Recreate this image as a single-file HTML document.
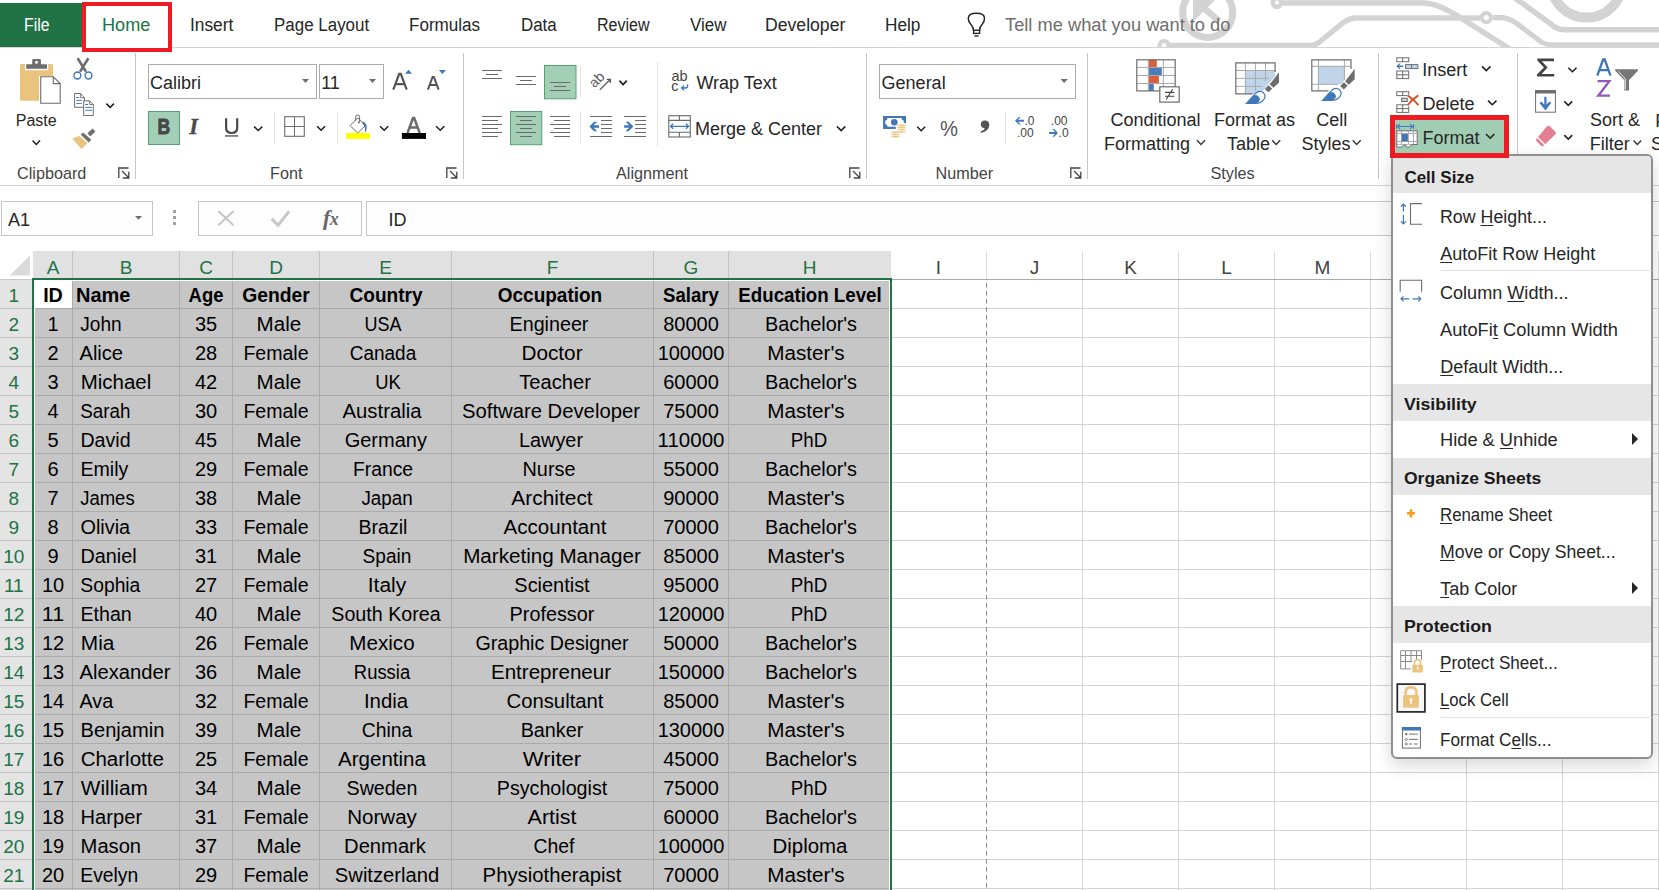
<!DOCTYPE html>
<html><head><meta charset="utf-8"><style>
html,body{margin:0;padding:0;}
body{width:1659px;height:890px;overflow:hidden;position:relative;background:#fff;font-family:'Liberation Sans', sans-serif;}
.t{position:absolute;white-space:pre;line-height:1;}
.r{position:absolute;}
u{text-decoration:underline;text-decoration-thickness:1px;text-underline-offset:1.5px;}
</style></head><body>
<svg class="r" style="left:0;top:0" width="1659" height="47" viewBox="0 0 1659 47"><circle cx="1207.7" cy="12.4" r="25" fill="none" stroke="#d3d3d3" stroke-width="7"/><polygon points="1193,-4 1219,-4 1193,22" fill="#d3d3d3"/><path d="M1198,3 L1219,21" stroke="#d3d3d3" stroke-width="6.5"/><path d="M1281,3 H1424 Q1436,3 1456,15 L1510,49" fill="none" stroke="#d3d3d3" stroke-width="5.5"/><circle cx="1277" cy="2.6" r="4.3" fill="none" stroke="#d3d3d3" stroke-width="4.2"/><path d="M1170,45.5 H1310 Q1316,45.5 1322,40 L1344,22 Q1350,18 1356,18 H1480 M1493,17.6 H1500 Q1508,17.6 1516,23 L1540,41 Q1545,44.8 1552,44.8 H1665" fill="none" stroke="#d3d3d3" stroke-width="5.3"/><circle cx="1164.1" cy="45.5" r="4.5" fill="none" stroke="#d3d3d3" stroke-width="4.2"/><circle cx="1486.3" cy="17.6" r="4.6" fill="none" stroke="#d3d3d3" stroke-width="4"/><path d="M1515,-2 L1551,24 Q1556,29.7 1565,29.7 H1665" fill="none" stroke="#d3d3d3" stroke-width="5.5"/><circle cx="1586.6" cy="-18" r="35.6" fill="none" stroke="#d3d3d3" stroke-width="10"/></svg><div class="r" style="left:0px;top:3px;width:82px;height:44px;background:#217346;"></div><div class="t" style="left:24.3px;top:16.3px;font-size:18px;color:#ffffff;transform:scaleX(0.8759);transform-origin:left center;">File</div><div class="r" style="left:82px;top:2px;width:90px;height:50px;box-sizing:border-box;border:4.5px solid #ed1c24;"></div><div class="t" style="left:102.4px;top:16.3px;font-size:18px;color:#217346;transform:scaleX(1.0062);transform-origin:left center;">Home</div><div class="t" style="left:190.4px;top:16.3px;font-size:18px;color:#262626;transform:scaleX(0.9622);transform-origin:left center;">Insert</div><div class="t" style="left:273.7px;top:16.3px;font-size:18px;color:#262626;transform:scaleX(0.9416);transform-origin:left center;">Page Layout</div><div class="t" style="left:408.7px;top:16.3px;font-size:18px;color:#262626;transform:scaleX(0.9480);transform-origin:left center;">Formulas</div><div class="t" style="left:520.7px;top:16.3px;font-size:18px;color:#262626;transform:scaleX(0.9396);transform-origin:left center;">Data</div><div class="t" style="left:596.6px;top:16.3px;font-size:18px;color:#262626;transform:scaleX(0.8917);transform-origin:left center;">Review</div><div class="t" style="left:689.9px;top:16.3px;font-size:18px;color:#262626;transform:scaleX(0.9433);transform-origin:left center;">View</div><div class="t" style="left:765.4px;top:16.3px;font-size:18px;color:#262626;transform:scaleX(0.9793);transform-origin:left center;">Developer</div><div class="t" style="left:885.3px;top:16.3px;font-size:18px;color:#262626;transform:scaleX(0.9568);transform-origin:left center;">Help</div><div class="t" style="left:1004.5px;top:16.3px;font-size:18px;color:#6e6e6e;transform:scaleX(1.0149);transform-origin:left center;">Tell me what you want to do</div><div class="r" style="left:172px;top:47px;width:1487px;height:1px;background:#d5d5d5;"></div><div class="r" style="left:0px;top:47px;width:82px;height:1px;background:#d5d5d5;"></div><div class="r" style="left:0px;top:185px;width:1659px;height:1px;background:#d5d5d5;"></div><div class="r" style="left:135px;top:53px;width:1px;height:126px;background:#c8c8c8;"></div><div class="r" style="left:463px;top:53px;width:1px;height:126px;background:#c8c8c8;"></div><div class="r" style="left:866px;top:53px;width:1px;height:126px;background:#c8c8c8;"></div><div class="r" style="left:1087px;top:53px;width:1px;height:126px;background:#c8c8c8;"></div><div class="r" style="left:1378px;top:53px;width:1px;height:126px;background:#c8c8c8;"></div><div class="r" style="left:1517px;top:53px;width:1px;height:126px;background:#c8c8c8;"></div><div class="t" style="left:17.0px;top:165.3px;font-size:16.2px;color:#444444;">Clipboard</div><div class="t" style="left:270.0px;top:165.3px;font-size:16.2px;color:#444444;">Font</div><div class="t" style="left:616.0px;top:165.3px;font-size:16.2px;color:#444444;">Alignment</div><div class="t" style="left:935.5px;top:165.3px;font-size:16.2px;color:#444444;">Number</div><div class="t" style="left:1210.5px;top:165.3px;font-size:16.2px;color:#444444;">Styles</div><div class="t" style="left:15.8px;top:112.8px;font-size:16px;color:#262626;">Paste</div><div class="t" style="left:150.0px;top:73.9px;font-size:18px;color:#262626;">Calibri</div><div class="t" style="left:321.2px;top:73.9px;font-size:18px;color:#262626;">11</div><div class="t" style="left:881.6px;top:73.9px;font-size:18px;color:#262626;">General</div><div class="t" style="left:696.4px;top:73.9px;font-size:18px;color:#262626;">Wrap Text</div><div class="t" style="left:695.0px;top:120.4px;font-size:18px;color:#262626;">Merge &amp; Center</div><div class="t" style="left:1085.5px;top:111.4px;width:140px;text-align:center;font-size:18px;color:#262626;">Conditional</div><div class="t" style="left:1104.0px;top:135.2px;font-size:18px;color:#262626;">Formatting</div><div class="t" style="left:1184.5px;top:111.4px;width:140px;text-align:center;font-size:18px;color:#262626;">Format as</div><div class="t" style="left:1227.0px;top:135.2px;font-size:18px;color:#262626;">Table</div><div class="t" style="left:1281.8px;top:111.4px;width:100px;text-align:center;font-size:18px;color:#262626;">Cell</div><div class="t" style="left:1301.6px;top:135.2px;font-size:18px;color:#262626;">Styles</div><div class="t" style="left:1422.3px;top:61.2px;font-size:18px;color:#262626;">Insert</div><div class="t" style="left:1422.6px;top:95.1px;font-size:18px;color:#262626;">Delete</div><div class="t" style="left:1590.0px;top:110.9px;font-size:18px;color:#262626;">Sort &amp;</div><div class="t" style="left:1589.8px;top:135.4px;font-size:18px;color:#262626;">Filter</div><div class="t" style="left:1655.3px;top:111.7px;font-size:18px;color:#262626;">F</div><div class="t" style="left:1651.0px;top:135.4px;font-size:18px;color:#262626;">S</div><svg class="r" style="left:0;top:0" width="1659" height="190" viewBox="0 0 1659 190"><path d="M21.5,64 H25 V70.3 H48.2 V64 H51.5 Q53,64 53,65.5 V76 H39 V100.7 H21.5 Q20,100.7 20,99.2 V65.5 Q20,64 21.5,64 Z" fill="#eac37d"/><path d="M26.2,64.3 H32.2 V60.3 Q32.2,59 33.5,59 H39.6 Q40.9,59 40.9,60.3 V64.3 H47 V68.7 H26.2 Z" fill="#6d6d6d"/><circle cx="36.5" cy="62.3" r="1.5" fill="#fff"/><path d="M40.7,76.8 H53.3 L60.2,83.6 V103.3 H40.7 Z" fill="#fff" stroke="#6d6d6d" stroke-width="1.1"/><path d="M53.3,76.8 V83.6 H60.2" fill="none" stroke="#6d6d6d" stroke-width="1.1"/><path d="M77.6,58.2 L86,71.6 M88.4,58.2 L80,71.6" stroke="#6d6d6d" stroke-width="2.6"/><circle cx="77.4" cy="75.5" r="3.45" fill="none" stroke="#3f77b8" stroke-width="1.4"/><circle cx="88.5" cy="75.5" r="3.45" fill="none" stroke="#3f77b8" stroke-width="1.4"/><path d="M74.6,93.5 H80.4 L84.4,97.7 V107.3 H74.6 Z" fill="#fff" stroke="#6d6d6d" stroke-width="1"/><path d="M80.4,93.5 V97.7 H84.4" fill="none" stroke="#6d6d6d" stroke-width="0.9"/><path d="M76.2,97.5 H78.8 M76.2,100.4 H81.8 M76.2,103.4 H81.8" stroke="#3f77b8" stroke-width="1"/><path d="M83.7,100.8 H89.6 L93.3,104.5 V115.5 H83.7 Z" fill="#fff" stroke="#6d6d6d" stroke-width="1"/><path d="M89.6,100.8 V104.5 H93.3" fill="none" stroke="#6d6d6d" stroke-width="0.9"/><path d="M85.3,104.5 H88 M85.3,107.4 H92 M85.3,110.3 H92" stroke="#3f77b8" stroke-width="1"/><polyline points="106.3,103.6 110.14999999999999,107.39999999999999 114.0,103.6" fill="none" stroke="#1e1e1e" stroke-width="1.5"/><polyline points="32.6,140.6 36.300000000000004,144.5 40.0,140.6" fill="none" stroke="#1e1e1e" stroke-width="1.5"/><path d="M72.2,138.4 L79.4,136.1 L87.5,143.3 L81.4,149 Z" fill="#eac37d"/><path d="M81,134.5 L83.2,133 L90.9,139.7 L88.7,142.1 Z" fill="#6d6d6d" stroke="#6d6d6d" stroke-width="0.8" stroke-linejoin="round"/><path d="M87.8,133.3 L92.5,129.1 L95,131.4 L90.3,136.1 Z" fill="#6d6d6d" stroke="#6d6d6d" stroke-width="0.8" stroke-linejoin="round"/><path d="M128.5,168.0 H118.8 V178.0" fill="none" stroke="#444" stroke-width="1.3"/><path d="M122.0,171.0 L128.8,177.8 M128.8,171.8 V178.0 H122.8" fill="none" stroke="#444" stroke-width="1.3"/><rect x="148.5" y="64.5" width="168" height="34" fill="none" stroke="#ababab" stroke-width="1"/><rect x="319.5" y="64.5" width="64" height="34" fill="none" stroke="#ababab" stroke-width="1"/><polygon points="302,79 309,79 305.5,83" fill="#6d6d6d"/><polygon points="369,79 376,79 372.5,83" fill="#6d6d6d"/><path d="M393.3,89.7 L399.2,73.8 H400.8 L406.7,89.7 M395.4,84.1 H404.6" fill="none" stroke="#555" stroke-width="2.2"/><polygon points="405,73.7 408.5,69.8 412,73.7" fill="#3f77b8"/><path d="M427.9,89.7 L432.6,76.9 H433.9 L438.6,89.7 M429.9,85 H436.6" fill="none" stroke="#555" stroke-width="2"/><polygon points="438.9,70.1 445.9,70.1 442.4,73.9" fill="#3f77b8"/><rect x="148.5" y="111.5" width="31" height="33" fill="#a3cfb7" stroke="#55a073" stroke-width="1"/><text x="157.4" y="134" font-family="Liberation Sans" font-weight="bold" font-size="17.5" fill="#474747" stroke="#474747" stroke-width="0.7" transform="translate(0,-33.5) scale(1,1.25)">B</text><text x="189.3" y="134" font-family="Liberation Serif" font-style="italic" font-weight="bold" font-size="22.5" fill="#4a4a4a" stroke="#4a4a4a" stroke-width="0.3">I</text><path d="M226.1,118.3 V127.8 Q226.1,133 231.65,133 Q237.2,133 237.2,127.8 V118.3" fill="none" stroke="#4a4a4a" stroke-width="2.2"/><rect x="225" y="135.3" width="13.3" height="1.3" fill="#4a4a4a"/><polyline points="254.1,126.6 258.2,130.5 262.3,126.6" fill="none" stroke="#1e1e1e" stroke-width="1.5"/><rect x="274" y="112" width="1" height="32" fill="#e3e3e3"/><rect x="284.7" y="116.7" width="19.6" height="19.6" fill="none" stroke="#6d6d6d" stroke-width="1.1"/><path d="M294.5,116.7 V136.3 M284.7,126.5 H304.3" stroke="#6d6d6d" stroke-width="1"/><polyline points="317.1,126.2 321.1,130.3 325.1,126.2" fill="none" stroke="#1e1e1e" stroke-width="1.5"/><rect x="337" y="112" width="1" height="32" fill="#e3e3e3"/><path d="M357.7,117.8 L365.3,125.6 L357.7,133 L350.1,125.6 Z" fill="#fff" stroke="#6d6d6d" stroke-width="1"/><path d="M355.7,121 V116.3 Q355.7,115.2 357,115.2 H358.6 Q359.6,115.2 359.6,116.3 V122" fill="none" stroke="#6d6d6d" stroke-width="1"/><circle cx="358.8" cy="122.6" r="1" fill="#6d6d6d"/><path d="M362.6,121.2 Q368.6,123 365.9,132.4 L364.8,131 Q365.6,126.3 362.9,124 Z" fill="#3f77b8"/><rect x="346.1" y="133" width="24" height="5.9" fill="#ffff00"/><polyline points="380,126.2 384.15,130.3 388.3,126.2" fill="none" stroke="#1e1e1e" stroke-width="1.5"/><path d="M407.5,133 L413,118 H414.2 L419.7,133 M409.6,127.6 H417.6" fill="none" stroke="#6d6d6d" stroke-width="2.5"/><rect x="401.9" y="133" width="24.1" height="5.9" fill="#000"/><polyline points="436.1,126.2 440.25,130.3 444.40000000000003,126.2" fill="none" stroke="#1e1e1e" stroke-width="1.5"/><path d="M456.5,168.0 H446.8 V178.0" fill="none" stroke="#444" stroke-width="1.3"/><path d="M450.0,171.0 L456.8,177.8 M456.8,171.8 V178.0 H450.8" fill="none" stroke="#444" stroke-width="1.3"/><rect x="482" y="70" width="20" height="1" fill="#6a6a6a"/><rect x="486" y="74" width="12" height="1" fill="#6a6a6a"/><rect x="482" y="78" width="20" height="1" fill="#6a6a6a"/><rect x="516" y="76" width="20" height="1" fill="#6a6a6a"/><rect x="520" y="80" width="12" height="1" fill="#6a6a6a"/><rect x="516" y="84" width="20" height="1" fill="#6a6a6a"/><rect x="544.5" y="65.5" width="31.5" height="33.3" fill="#a3cfb7" stroke="#55a073" stroke-width="1"/><rect x="550" y="82" width="20" height="1" fill="#6a6a6a"/><rect x="554" y="86" width="12" height="1" fill="#6a6a6a"/><rect x="550" y="90" width="20" height="1" fill="#6a6a6a"/><rect x="580" y="65.7" width="1" height="31.5" fill="#e3e3e3"/><text x="0" y="0" font-family="Liberation Sans" font-size="14" fill="#555" transform="translate(594.5,88.5) rotate(-45)">ab</text><path d="M599.8,89.9 L610.4,79.3 M606.8,79.3 H610.4 V82.9" fill="none" stroke="#555" stroke-width="1.3"/><polyline points="619.4,80.7 623.1,84.5 626.8,80.7" fill="none" stroke="#1e1e1e" stroke-width="1.7"/><rect x="510.5" y="111.5" width="31.3" height="33.2" fill="#a3cfb7" stroke="#55a073" stroke-width="1"/><rect x="482" y="116" width="20" height="1" fill="#6a6a6a"/><rect x="516" y="116" width="20" height="1" fill="#6a6a6a"/><rect x="550" y="116" width="20" height="1" fill="#6a6a6a"/><rect x="482" y="120" width="16" height="1" fill="#6a6a6a"/><rect x="520" y="120" width="12" height="1" fill="#6a6a6a"/><rect x="554" y="120" width="16" height="1" fill="#6a6a6a"/><rect x="482" y="124" width="20" height="1" fill="#6a6a6a"/><rect x="516" y="124" width="20" height="1" fill="#6a6a6a"/><rect x="550" y="124" width="20" height="1" fill="#6a6a6a"/><rect x="482" y="128" width="16" height="1" fill="#6a6a6a"/><rect x="520" y="128" width="12" height="1" fill="#6a6a6a"/><rect x="554" y="128" width="16" height="1" fill="#6a6a6a"/><rect x="482" y="132" width="20" height="1" fill="#6a6a6a"/><rect x="516" y="132" width="20" height="1" fill="#6a6a6a"/><rect x="550" y="132" width="20" height="1" fill="#6a6a6a"/><rect x="482" y="136" width="16" height="1" fill="#6a6a6a"/><rect x="520" y="136" width="12" height="1" fill="#6a6a6a"/><rect x="554" y="136" width="16" height="1" fill="#6a6a6a"/><rect x="580" y="112" width="1" height="32" fill="#e3e3e3"/><rect x="590" y="116" width="22" height="1" fill="#6a6a6a"/><rect x="590" y="136" width="22" height="1" fill="#6a6a6a"/><rect x="601" y="120" width="11" height="1" fill="#6a6a6a"/><rect x="601" y="124" width="11" height="1" fill="#6a6a6a"/><rect x="601" y="128" width="11" height="1" fill="#6a6a6a"/><rect x="601" y="132" width="11" height="1" fill="#6a6a6a"/><rect x="624" y="116" width="22" height="1" fill="#6a6a6a"/><rect x="624" y="136" width="22" height="1" fill="#6a6a6a"/><rect x="635" y="120" width="11" height="1" fill="#6a6a6a"/><rect x="635" y="124" width="11" height="1" fill="#6a6a6a"/><rect x="635" y="128" width="11" height="1" fill="#6a6a6a"/><rect x="635" y="132" width="11" height="1" fill="#6a6a6a"/><polygon points="589.4,126.5 594.2,121.8 597.2,121.8 593.6,125.2 599,125.2 599,127.8 593.6,127.8 597.2,131.2 594.2,131.2" fill="#3f77b8"/><polygon points="633.4,126.5 628.6,121.8 625.6,121.8 629.2,125.2 624.1,125.2 624.1,127.8 629.2,127.8 625.6,131.2 628.6,131.2" fill="#3f77b8"/><rect x="657" y="62" width="1" height="84.5" fill="#e3e3e3"/><text x="671.5" y="80.8" font-family="Liberation Sans" font-size="14.5" fill="#444">ab</text><text x="671.3" y="90.8" font-family="Liberation Sans" font-size="14.5" fill="#444">c</text><path d="M687.6,84.2 V86 Q687.6,88 685.5,88 H681.8 M684,85.8 L681.6,88 L684,90.2" fill="none" stroke="#3f77b8" stroke-width="1.3"/><rect x="668.8" y="115.7" width="21.5" height="21.3" fill="#fff" stroke="#6a6a6a" stroke-width="1.1"/><path d="M668.8,120.4 H690.3 M668.8,132.2 H690.3 M679.4,115.7 V120.4 M679.4,132.2 V137" stroke="#6a6a6a" stroke-width="1.1"/><path d="M670.6,126.3 H688.6 M673.2,123.8 L670.6,126.3 L673.2,128.8 M686,123.8 L688.6,126.3 L686,128.8" fill="none" stroke="#3f77b8" stroke-width="1.3"/><polyline points="837,126.4 841.15,130.6 845.3,126.4" fill="none" stroke="#1e1e1e" stroke-width="1.5"/><path d="M859.5,168.0 H849.8000000000001 V178.0" fill="none" stroke="#444" stroke-width="1.3"/><path d="M853.0,171.0 L859.8000000000001,177.8 M859.8000000000001,171.8 V178.0 H853.8000000000001" fill="none" stroke="#444" stroke-width="1.3"/><rect x="879.5" y="64.5" width="196" height="34" fill="none" stroke="#ababab" stroke-width="1"/><polygon points="1060.5,79 1067.8,79 1064.15,83" fill="#6d6d6d"/><path d="M883.1,115.9 H906 V123 H903.8 V120.6 Q901.6,120.6 901.6,118.1 H887.5 Q887.5,120.6 885.3,120.6 V124.3 Q887.5,124.3 887.5,126.7 H895.8 V128.9 H883.1 Z" fill="#3f77b8"/><circle cx="894.3" cy="122.3" r="3.3" fill="#3f77b8"/><ellipse cx="901.6" cy="125.2" rx="4.4" ry="1.1" fill="#eac37d" stroke="#fff" stroke-width="0.5"/><ellipse cx="901.6" cy="127.4" rx="4.4" ry="1.1" fill="#eac37d" stroke="#fff" stroke-width="0.5"/><ellipse cx="901.6" cy="129.6" rx="4.4" ry="1.1" fill="#eac37d" stroke="#fff" stroke-width="0.5"/><ellipse cx="901.6" cy="131.8" rx="4.4" ry="1.1" fill="#eac37d" stroke="#fff" stroke-width="0.5"/><ellipse cx="895.4" cy="132.2" rx="4.4" ry="1.1" fill="#eac37d" stroke="#fff" stroke-width="0.5"/><ellipse cx="895.4" cy="134.4" rx="4.4" ry="1.1" fill="#eac37d" stroke="#fff" stroke-width="0.5"/><ellipse cx="895.4" cy="136.6" rx="4.4" ry="1.1" fill="#eac37d" stroke="#fff" stroke-width="0.5"/><polyline points="917.2,126.7 921.1500000000001,130.7 925.1,126.7" fill="none" stroke="#1e1e1e" stroke-width="1.5"/><text x="940" y="135.8" font-family="Liberation Sans" font-size="22" fill="#555" transform="translate(940,0) scale(0.92,1) translate(-940,0)">%</text><path d="M984.8,120.4 Q989.4,120.4 989.3,125.3 Q989,131 981,133 L980.6,131.6 Q984.4,130.1 984.6,128.2 Q980.8,128 980.8,124.3 Q980.9,120.4 984.8,120.4 Z" fill="#555"/><rect x="1005" y="112" width="1" height="32" fill="#e3e3e3"/><polygon points="1015,120.7 1018.8,116.9 1020.6,116.9 1018,119.7 1024,119.7 1024,121.7 1018,121.7 1020.6,124.5 1018.8,124.5" fill="#3f77b8"/><text x="1024.5" y="124.7" font-family="Liberation Sans" font-size="12" fill="#444">.0</text><text x="1017" y="136.9" font-family="Liberation Sans" font-size="12" fill="#444">.00</text><text x="1050.8" y="124.7" font-family="Liberation Sans" font-size="12" fill="#444">.00</text><polygon points="1058,132.9 1054.2,129.1 1052.4,129.1 1055,131.9 1049.1,131.9 1049.1,133.9 1055,133.9 1052.4,136.7 1054.2,136.7" fill="#3f77b8"/><text x="1058.6" y="136.9" font-family="Liberation Sans" font-size="12" fill="#444">.0</text><path d="M1080.5,168.0 H1070.8 V178.0" fill="none" stroke="#444" stroke-width="1.3"/><path d="M1074.0,171.0 L1080.8,177.8 M1080.8,171.8 V178.0 H1074.8" fill="none" stroke="#444" stroke-width="1.3"/><rect x="1136.8" y="59.8" width="38.4" height="31.1" fill="#fff"/><rect x="1148.8" y="59.8" width="8" height="7.6" fill="#dd5f3a"/><rect x="1148.8" y="67.4" width="13" height="8.1" fill="#4a7ebb"/><rect x="1148.8" y="75.5" width="10.1" height="8" fill="#dd5f3a"/><rect x="1148.8" y="83.5" width="5" height="7.4" fill="#4a7ebb"/><path d="M1136.8,67.4 H1175.2 M1136.8,75.5 H1175.2 M1136.8,83.5 H1175.2 M1148.3,59.8 V90.9 M1163.3,59.8 V90.9" stroke="#a8a8a8" stroke-width="1"/><rect x="1136.8" y="59.8" width="38.4" height="31.1" fill="none" stroke="#6d6d6d" stroke-width="1.2"/><rect x="1159.8" y="86.8" width="19.4" height="15.3" fill="#fff" stroke="#6d6d6d" stroke-width="1.2"/><path d="M1165.1,92.4 H1174.3 M1165.1,96.2 H1174.3 M1172.6,89.2 L1166.2,99.5" stroke="#444" stroke-width="1.1"/><rect x="1235.8" y="62.8" width="39.3" height="31.1" fill="#fff"/><path d="M1245.4,70.5 H1275.1 V79 L1259,94 H1245.4 Z" fill="#c0d4ea"/><path d="M1235.8,70.5 H1275.1 M1235.8,78.4 H1269 M1235.8,86.4 H1262 M1245.4,62.8 V93.9 M1255.4,62.8 V91 M1265.5,62.8 V81" stroke="#a8a8a8" stroke-width="1"/><path d="M1252.5,93.9 H1235.8 V62.8 H1275.1 V72" fill="none" stroke="#6d6d6d" stroke-width="1.2"/><polygon points="1264.2,89.3 1268.6,93.7 1278.9,82.1 1278.9,71.7" fill="#fff"/><polygon points="1264.7,88.9 1268.4,92.3 1272.2,88.7 1268.6,85.2" fill="#6d6d6d"/><polygon points="1269.7,84.3 1273.4,87.8 1279,82.6 1279,72.3" fill="#6d6d6d"/><path d="M1246.2,103.5 L1255.4,93.5 Q1259.5,89.6 1263.5,92.8 Q1267,96.6 1262.5,101 Q1260,103.5 1255.5,103.5 Z" fill="#fff" stroke="#3f77b8" stroke-width="1.1"/><path d="M1246.2,103.5 L1254,95.2 Q1258.5,94.3 1260,99.6 Q1258.5,103.5 1255.5,103.5 Z" fill="#3f77b8"/><rect x="1311.8" y="59.8" width="39.2" height="31.1" fill="#fff"/><rect x="1318.4" y="66.3" width="26" height="18" fill="#c0d4ea"/><path d="M1311.8,66.3 H1351 M1311.8,84.3 H1338 M1318.4,59.8 V90.9 M1344.4,59.8 V80" stroke="#a8a8a8" stroke-width="1"/><path d="M1328.5,90.9 H1311.8 V59.8 H1351 V69" fill="none" stroke="#6d6d6d" stroke-width="1.2"/><polygon points="1339.5,86 1344.5,90.5 1355,80 1355,68.7" fill="#fff"/><polygon points="1340.2,85.9 1343.8,89.5 1347.6,85.8 1344,82.2" fill="#6d6d6d"/><polygon points="1345.2,81.2 1348.8,84.7 1354.7,79.3 1354.7,68.8" fill="#6d6d6d"/><path d="M1322.3,100.5 L1331.5,90.5 Q1335.6,86.6 1339.6,89.8 Q1343.1,93.6 1338.6,98 Q1336.1,100.5 1331.6,100.5 Z" fill="#fff" stroke="#3f77b8" stroke-width="1.1"/><path d="M1322.3,100.5 L1330.1,92.2 Q1334.6,91.3 1336.1,96.6 Q1334.6,100.5 1331.6,100.5 Z" fill="#3f77b8"/><polyline points="1197,140.3 1201.0,144.5 1205,140.3" fill="none" stroke="#333" stroke-width="1.4"/><polyline points="1272.2,140.3 1276.2,144.5 1280.2,140.3" fill="none" stroke="#333" stroke-width="1.4"/><polyline points="1352.7,140.3 1356.7,144.5 1360.7,140.3" fill="none" stroke="#333" stroke-width="1.4"/><rect x="1396.8" y="57.8" width="11.9" height="3.9" fill="#fff" stroke="#6d6d6d" stroke-width="1.0"/><path d="M1402.7,57.8 V61.699999999999996" stroke="#6d6d6d" stroke-width="1.0"/><polygon points="1396.4,66.3 1399.3,63.6 1400.6,63.6 1399,65.5 1403.2,65.5 1403.2,67.1 1399,67.1 1400.6,69 1399.3,69" fill="#3f77b8"/><rect x="1405.6" y="64.6" width="12.2" height="4" fill="#c0d4ea" stroke="#6d6d6d" stroke-width="1.0"/><path d="M1411.6,64.6 V68.6" stroke="#6d6d6d" stroke-width="1.0"/><rect x="1396.8" y="71" width="11.9" height="7.6" fill="#fff" stroke="#6d6d6d" stroke-width="1.0"/><path d="M1402.7,71 V78.6" stroke="#6d6d6d" stroke-width="1.0"/><path d="M1396.8,74.8 H1408.7" stroke="#6d6d6d" stroke-width="1.0"/><rect x="1396.8" y="91.7" width="11.9" height="3.9" fill="#fff" stroke="#6d6d6d" stroke-width="1.0"/><path d="M1402.7,91.7 V95.60000000000001" stroke="#6d6d6d" stroke-width="1.0"/><rect x="1401.7" y="98.2" width="5.6" height="3.3" fill="#c0d4ea" stroke="#6d6d6d" stroke-width="1.0"/><rect x="1396.8" y="104.8" width="11.9" height="7.6" fill="#fff" stroke="#6d6d6d" stroke-width="1.0"/><path d="M1402.7,104.8 V112.39999999999999" stroke="#6d6d6d" stroke-width="1.0"/><path d="M1396.8,108.6 H1408.7" stroke="#6d6d6d" stroke-width="1.0"/><path d="M1407.6,95.6 L1418.4,105.2 M1418.4,95.4 L1407.6,105.2" stroke="#fff" stroke-width="3.2"/><path d="M1407.6,95.6 Q1413,98.5 1418.4,105.2 M1418.4,95.4 Q1412,99 1407.6,105.2" fill="none" stroke="#d9542e" stroke-width="1.9"/><path d="M1537.3,58.6 H1554 V61.2 H1541.8 L1547.6,67.5 L1541.6,74 H1554.2 V76.6 H1536.9 V74.6 L1543.9,67.5 L1537.3,60.6 Z" fill="#444"/><polyline points="1568.3,67.7 1572.3999999999999,71.7 1576.5,67.7" fill="none" stroke="#1e1e1e" stroke-width="1.5"/><rect x="1535.6" y="90.7" width="19.8" height="21.5" fill="#fff" stroke="#6d6d6d" stroke-width="1"/><rect x="1535.1" y="90.2" width="20.8" height="3.3" fill="#6d6d6d"/><path d="M1544.3,96.8 H1546.5 V104.6 L1549.6,101.4 L1551.2,103 L1545.4,110.4 L1539.6,103 L1541.2,101.4 L1544.3,104.6 Z" fill="#3f77b8"/><polyline points="1564.3,101.4 1568.25,105.4 1572.2,101.4" fill="none" stroke="#1e1e1e" stroke-width="1.5"/><path d="M1547,126.3 Q1548.4,125 1549.8,126.3 L1555.4,131.8 Q1556.6,133 1555.4,134.3 L1543.6,145.7 Q1542.4,147 1541,145.7 L1536.6,141.3 Q1535.3,140 1536.6,138.7 Z" fill="#e47f93"/><path d="M1537.6,137.5 L1545.6,145.5" stroke="#fff" stroke-width="1.3"/><polyline points="1564.3,135.1 1568.25,139.1 1572.2,135.1" fill="none" stroke="#1e1e1e" stroke-width="1.5"/><path d="M1597.3,75.7 L1603.1,59.5 H1604.7 L1610.5,75.7 M1599.5,70.1 H1608.3" fill="none" stroke="#3f77b8" stroke-width="2.3"/><path d="M1597.6,81.1 H1609.4 L1598.3,95.7 H1610" fill="none" stroke="#9457b5" stroke-width="2.3"/><path d="M1615.2,69.3 H1637.9 V70.8 L1629,80.3 V90.6 H1624.4 V80.3 L1615.2,70.8 Z" fill="#767676"/><path d="M1618.3,71.2 L1625.4,79 V89.4" fill="none" stroke="#fff" stroke-width="0.8"/><path d="M973.6,30.3 Q973,26.5 970.6,24 Q968.3,21.6 968.3,18.5 Q968.3,13.3 976.4,13.3 M979.5,30.3 Q980,26.5 982.3,24 Q984.5,21.6 984.5,18.5 Q984.5,13.3 976.4,13.3" fill="none" stroke="#262626" stroke-width="1.5"/><rect x="973.6" y="30.3" width="6" height="3.1" fill="none" stroke="#262626" stroke-width="1.4"/><path d="M974.4,36 H978.6" stroke="#262626" stroke-width="1.4"/><polyline points="1482,66.4 1486.25,70.60000000000001 1490.5,66.4" fill="none" stroke="#1e1e1e" stroke-width="1.5"/><polyline points="1488,100.6 1492.25,104.8 1496.5,100.6" fill="none" stroke="#1e1e1e" stroke-width="1.5"/><polyline points="1633.5,140.5 1637.35,144.5 1641.2,140.5" fill="none" stroke="#333" stroke-width="1.4"/></svg><div class="r" style="left:1px;top:201px;width:152px;height:35px;box-sizing:border-box;border:1px solid #c6c6c6;background:#fdfdfd;"></div><div class="t" style="left:8.0px;top:211.4px;font-size:18px;color:#262626;">A1</div><div class="r" style="left:198px;top:201px;width:164px;height:35px;box-sizing:border-box;border:1px solid #c6c6c6;background:#fdfdfd;"></div><div class="r" style="left:366px;top:201px;width:1300px;height:35px;box-sizing:border-box;border:1px solid #c6c6c6;background:#fdfdfd;"></div><div class="t" style="left:388.5px;top:211.4px;font-size:18px;color:#262626;">ID</div><svg class="r" style="left:0;top:0" width="1659" height="250" viewBox="0 0 1659 250"><path d="M218.2,211 L233.6,225.4 M233.6,211 L218.2,225.4" stroke="#c3c3c3" stroke-width="1.9"/><path d="M271.6,218.6 L278.1,225.2 L289.2,211.3" fill="none" stroke="#c8c8c8" stroke-width="3"/><text x="323" y="224.5" font-family="Liberation Serif" font-style="italic" font-weight="bold" font-size="22" fill="#666">f<tspan dx="-0.5" font-size="18">x</tspan></text><rect x="173" y="210" width="3" height="3" fill="#a0a0a0"/><rect x="173" y="216" width="3" height="3" fill="#a0a0a0"/><rect x="173" y="222" width="3" height="3" fill="#a0a0a0"/><polygon points="135,216 142,216 138.5,219.7" fill="#6d6d6d"/></svg><div class="r" style="left:33px;top:251px;width:857px;height:28px;background:#e1e1e1;"></div><div class="r" style="left:0px;top:280px;width:32px;height:610px;background:#e4e4e4;"></div><div class="r" style="left:0px;top:279px;width:32px;height:1px;background:#c8c8c8;"></div><svg class="r" style="left:0px;top:251px;" width="33" height="28" viewBox="0 0 33 28"><polygon points="9.5,24.5 30,24.5 30,4.5" fill="#dadada"/></svg><div class="r" style="left:72px;top:251px;width:1px;height:28px;background:#c3c3c3;"></div><div class="r" style="left:179px;top:251px;width:1px;height:28px;background:#c3c3c3;"></div><div class="r" style="left:232px;top:251px;width:1px;height:28px;background:#c3c3c3;"></div><div class="r" style="left:319px;top:251px;width:1px;height:28px;background:#c3c3c3;"></div><div class="r" style="left:451px;top:251px;width:1px;height:28px;background:#c3c3c3;"></div><div class="r" style="left:653px;top:251px;width:1px;height:28px;background:#c3c3c3;"></div><div class="r" style="left:728px;top:251px;width:1px;height:28px;background:#c3c3c3;"></div><div class="r" style="left:890px;top:251px;width:1px;height:28px;background:#dedede;"></div><div class="r" style="left:986px;top:251px;width:1px;height:28px;background:#dedede;"></div><div class="r" style="left:1082px;top:251px;width:1px;height:28px;background:#dedede;"></div><div class="r" style="left:1178px;top:251px;width:1px;height:28px;background:#dedede;"></div><div class="r" style="left:1274px;top:251px;width:1px;height:28px;background:#dedede;"></div><div class="r" style="left:1370px;top:251px;width:1px;height:28px;background:#dedede;"></div><div class="r" style="left:1466px;top:251px;width:1px;height:28px;background:#dedede;"></div><div class="r" style="left:1562px;top:251px;width:1px;height:28px;background:#dedede;"></div><div class="r" style="left:1658px;top:251px;width:1px;height:28px;background:#dedede;"></div><div class="r" style="left:890px;top:279px;width:769px;height:1px;background:#ababab;"></div><div class="r" style="left:0px;top:308px;width:32px;height:1px;background:#c3c3c3;"></div><div class="r" style="left:0px;top:337px;width:32px;height:1px;background:#c3c3c3;"></div><div class="r" style="left:0px;top:366px;width:32px;height:1px;background:#c3c3c3;"></div><div class="r" style="left:0px;top:395px;width:32px;height:1px;background:#c3c3c3;"></div><div class="r" style="left:0px;top:424px;width:32px;height:1px;background:#c3c3c3;"></div><div class="r" style="left:0px;top:453px;width:32px;height:1px;background:#c3c3c3;"></div><div class="r" style="left:0px;top:482px;width:32px;height:1px;background:#c3c3c3;"></div><div class="r" style="left:0px;top:511px;width:32px;height:1px;background:#c3c3c3;"></div><div class="r" style="left:0px;top:540px;width:32px;height:1px;background:#c3c3c3;"></div><div class="r" style="left:0px;top:569px;width:32px;height:1px;background:#c3c3c3;"></div><div class="r" style="left:0px;top:598px;width:32px;height:1px;background:#c3c3c3;"></div><div class="r" style="left:0px;top:627px;width:32px;height:1px;background:#c3c3c3;"></div><div class="r" style="left:0px;top:656px;width:32px;height:1px;background:#c3c3c3;"></div><div class="r" style="left:0px;top:685px;width:32px;height:1px;background:#c3c3c3;"></div><div class="r" style="left:0px;top:714px;width:32px;height:1px;background:#c3c3c3;"></div><div class="r" style="left:0px;top:743px;width:32px;height:1px;background:#c3c3c3;"></div><div class="r" style="left:0px;top:772px;width:32px;height:1px;background:#c3c3c3;"></div><div class="r" style="left:0px;top:801px;width:32px;height:1px;background:#c3c3c3;"></div><div class="r" style="left:0px;top:830px;width:32px;height:1px;background:#c3c3c3;"></div><div class="r" style="left:0px;top:859px;width:32px;height:1px;background:#c3c3c3;"></div><div class="r" style="left:0px;top:888px;width:32px;height:1px;background:#c3c3c3;"></div><div class="r" style="left:0px;top:917px;width:32px;height:1px;background:#c3c3c3;"></div><div class="r" style="left:35px;top:281px;width:854px;height:609px;background:#c6c6c6;"></div><div class="r" style="left:35px;top:281px;width:37px;height:27px;background:#ffffff;"></div><div class="r" style="left:34px;top:280px;width:855px;height:1px;background:#ffffff;"></div><div class="r" style="left:34px;top:280px;width:1px;height:610px;background:#ffffff;"></div><div class="r" style="left:889px;top:280px;width:1px;height:610px;background:#ffffff;"></div><div class="r" style="left:72px;top:281px;width:1px;height:609px;background:#ababab;"></div><div class="r" style="left:179px;top:281px;width:1px;height:609px;background:#ababab;"></div><div class="r" style="left:232px;top:281px;width:1px;height:609px;background:#ababab;"></div><div class="r" style="left:319px;top:281px;width:1px;height:609px;background:#ababab;"></div><div class="r" style="left:451px;top:281px;width:1px;height:609px;background:#ababab;"></div><div class="r" style="left:653px;top:281px;width:1px;height:609px;background:#ababab;"></div><div class="r" style="left:728px;top:281px;width:1px;height:609px;background:#ababab;"></div><div class="r" style="left:35px;top:308px;width:854px;height:1px;background:#ababab;"></div><div class="r" style="left:35px;top:337px;width:854px;height:1px;background:#ababab;"></div><div class="r" style="left:35px;top:366px;width:854px;height:1px;background:#ababab;"></div><div class="r" style="left:35px;top:395px;width:854px;height:1px;background:#ababab;"></div><div class="r" style="left:35px;top:424px;width:854px;height:1px;background:#ababab;"></div><div class="r" style="left:35px;top:453px;width:854px;height:1px;background:#ababab;"></div><div class="r" style="left:35px;top:482px;width:854px;height:1px;background:#ababab;"></div><div class="r" style="left:35px;top:511px;width:854px;height:1px;background:#ababab;"></div><div class="r" style="left:35px;top:540px;width:854px;height:1px;background:#ababab;"></div><div class="r" style="left:35px;top:569px;width:854px;height:1px;background:#ababab;"></div><div class="r" style="left:35px;top:598px;width:854px;height:1px;background:#ababab;"></div><div class="r" style="left:35px;top:627px;width:854px;height:1px;background:#ababab;"></div><div class="r" style="left:35px;top:656px;width:854px;height:1px;background:#ababab;"></div><div class="r" style="left:35px;top:685px;width:854px;height:1px;background:#ababab;"></div><div class="r" style="left:35px;top:714px;width:854px;height:1px;background:#ababab;"></div><div class="r" style="left:35px;top:743px;width:854px;height:1px;background:#ababab;"></div><div class="r" style="left:35px;top:772px;width:854px;height:1px;background:#ababab;"></div><div class="r" style="left:35px;top:801px;width:854px;height:1px;background:#ababab;"></div><div class="r" style="left:35px;top:830px;width:854px;height:1px;background:#ababab;"></div><div class="r" style="left:35px;top:859px;width:854px;height:1px;background:#ababab;"></div><div class="r" style="left:35px;top:888px;width:854px;height:1px;background:#ababab;"></div><div class="r" style="left:1082px;top:280px;width:1px;height:610px;background:#d4d4d4;"></div><div class="r" style="left:1178px;top:280px;width:1px;height:610px;background:#d4d4d4;"></div><div class="r" style="left:1274px;top:280px;width:1px;height:610px;background:#d4d4d4;"></div><div class="r" style="left:1370px;top:280px;width:1px;height:610px;background:#d4d4d4;"></div><div class="r" style="left:1466px;top:280px;width:1px;height:610px;background:#d4d4d4;"></div><div class="r" style="left:1562px;top:280px;width:1px;height:610px;background:#d4d4d4;"></div><div class="r" style="left:1658px;top:280px;width:1px;height:610px;background:#d4d4d4;"></div><div class="r" style="left:892px;top:308px;width:767px;height:1px;background:#d4d4d4;"></div><div class="r" style="left:892px;top:337px;width:767px;height:1px;background:#d4d4d4;"></div><div class="r" style="left:892px;top:366px;width:767px;height:1px;background:#d4d4d4;"></div><div class="r" style="left:892px;top:395px;width:767px;height:1px;background:#d4d4d4;"></div><div class="r" style="left:892px;top:424px;width:767px;height:1px;background:#d4d4d4;"></div><div class="r" style="left:892px;top:453px;width:767px;height:1px;background:#d4d4d4;"></div><div class="r" style="left:892px;top:482px;width:767px;height:1px;background:#d4d4d4;"></div><div class="r" style="left:892px;top:511px;width:767px;height:1px;background:#d4d4d4;"></div><div class="r" style="left:892px;top:540px;width:767px;height:1px;background:#d4d4d4;"></div><div class="r" style="left:892px;top:569px;width:767px;height:1px;background:#d4d4d4;"></div><div class="r" style="left:892px;top:598px;width:767px;height:1px;background:#d4d4d4;"></div><div class="r" style="left:892px;top:627px;width:767px;height:1px;background:#d4d4d4;"></div><div class="r" style="left:892px;top:656px;width:767px;height:1px;background:#d4d4d4;"></div><div class="r" style="left:892px;top:685px;width:767px;height:1px;background:#d4d4d4;"></div><div class="r" style="left:892px;top:714px;width:767px;height:1px;background:#d4d4d4;"></div><div class="r" style="left:892px;top:743px;width:767px;height:1px;background:#d4d4d4;"></div><div class="r" style="left:892px;top:772px;width:767px;height:1px;background:#d4d4d4;"></div><div class="r" style="left:892px;top:801px;width:767px;height:1px;background:#d4d4d4;"></div><div class="r" style="left:892px;top:830px;width:767px;height:1px;background:#d4d4d4;"></div><div class="r" style="left:892px;top:859px;width:767px;height:1px;background:#d4d4d4;"></div><div class="r" style="left:892px;top:888px;width:767px;height:1px;background:#d4d4d4;"></div><svg class="r" style="left:986px;top:280px;" width="1" height="610" viewBox="0 0 1 610"><rect x="0" y="3" width="1" height="4.6" fill="#8c8c8c"/><rect x="0" y="11" width="1" height="4.6" fill="#8c8c8c"/><rect x="0" y="19" width="1" height="4.6" fill="#8c8c8c"/><rect x="0" y="27" width="1" height="4.6" fill="#8c8c8c"/><rect x="0" y="35" width="1" height="4.6" fill="#8c8c8c"/><rect x="0" y="43" width="1" height="4.6" fill="#8c8c8c"/><rect x="0" y="51" width="1" height="4.6" fill="#8c8c8c"/><rect x="0" y="59" width="1" height="4.6" fill="#8c8c8c"/><rect x="0" y="67" width="1" height="4.6" fill="#8c8c8c"/><rect x="0" y="75" width="1" height="4.6" fill="#8c8c8c"/><rect x="0" y="83" width="1" height="4.6" fill="#8c8c8c"/><rect x="0" y="91" width="1" height="4.6" fill="#8c8c8c"/><rect x="0" y="99" width="1" height="4.6" fill="#8c8c8c"/><rect x="0" y="107" width="1" height="4.6" fill="#8c8c8c"/><rect x="0" y="115" width="1" height="4.6" fill="#8c8c8c"/><rect x="0" y="123" width="1" height="4.6" fill="#8c8c8c"/><rect x="0" y="131" width="1" height="4.6" fill="#8c8c8c"/><rect x="0" y="139" width="1" height="4.6" fill="#8c8c8c"/><rect x="0" y="147" width="1" height="4.6" fill="#8c8c8c"/><rect x="0" y="155" width="1" height="4.6" fill="#8c8c8c"/><rect x="0" y="163" width="1" height="4.6" fill="#8c8c8c"/><rect x="0" y="171" width="1" height="4.6" fill="#8c8c8c"/><rect x="0" y="179" width="1" height="4.6" fill="#8c8c8c"/><rect x="0" y="187" width="1" height="4.6" fill="#8c8c8c"/><rect x="0" y="195" width="1" height="4.6" fill="#8c8c8c"/><rect x="0" y="203" width="1" height="4.6" fill="#8c8c8c"/><rect x="0" y="211" width="1" height="4.6" fill="#8c8c8c"/><rect x="0" y="219" width="1" height="4.6" fill="#8c8c8c"/><rect x="0" y="227" width="1" height="4.6" fill="#8c8c8c"/><rect x="0" y="235" width="1" height="4.6" fill="#8c8c8c"/><rect x="0" y="243" width="1" height="4.6" fill="#8c8c8c"/><rect x="0" y="251" width="1" height="4.6" fill="#8c8c8c"/><rect x="0" y="259" width="1" height="4.6" fill="#8c8c8c"/><rect x="0" y="267" width="1" height="4.6" fill="#8c8c8c"/><rect x="0" y="275" width="1" height="4.6" fill="#8c8c8c"/><rect x="0" y="283" width="1" height="4.6" fill="#8c8c8c"/><rect x="0" y="291" width="1" height="4.6" fill="#8c8c8c"/><rect x="0" y="299" width="1" height="4.6" fill="#8c8c8c"/><rect x="0" y="307" width="1" height="4.6" fill="#8c8c8c"/><rect x="0" y="315" width="1" height="4.6" fill="#8c8c8c"/><rect x="0" y="323" width="1" height="4.6" fill="#8c8c8c"/><rect x="0" y="331" width="1" height="4.6" fill="#8c8c8c"/><rect x="0" y="339" width="1" height="4.6" fill="#8c8c8c"/><rect x="0" y="347" width="1" height="4.6" fill="#8c8c8c"/><rect x="0" y="355" width="1" height="4.6" fill="#8c8c8c"/><rect x="0" y="363" width="1" height="4.6" fill="#8c8c8c"/><rect x="0" y="371" width="1" height="4.6" fill="#8c8c8c"/><rect x="0" y="379" width="1" height="4.6" fill="#8c8c8c"/><rect x="0" y="387" width="1" height="4.6" fill="#8c8c8c"/><rect x="0" y="395" width="1" height="4.6" fill="#8c8c8c"/><rect x="0" y="403" width="1" height="4.6" fill="#8c8c8c"/><rect x="0" y="411" width="1" height="4.6" fill="#8c8c8c"/><rect x="0" y="419" width="1" height="4.6" fill="#8c8c8c"/><rect x="0" y="427" width="1" height="4.6" fill="#8c8c8c"/><rect x="0" y="435" width="1" height="4.6" fill="#8c8c8c"/><rect x="0" y="443" width="1" height="4.6" fill="#8c8c8c"/><rect x="0" y="451" width="1" height="4.6" fill="#8c8c8c"/><rect x="0" y="459" width="1" height="4.6" fill="#8c8c8c"/><rect x="0" y="467" width="1" height="4.6" fill="#8c8c8c"/><rect x="0" y="475" width="1" height="4.6" fill="#8c8c8c"/><rect x="0" y="483" width="1" height="4.6" fill="#8c8c8c"/><rect x="0" y="491" width="1" height="4.6" fill="#8c8c8c"/><rect x="0" y="499" width="1" height="4.6" fill="#8c8c8c"/><rect x="0" y="507" width="1" height="4.6" fill="#8c8c8c"/><rect x="0" y="515" width="1" height="4.6" fill="#8c8c8c"/><rect x="0" y="523" width="1" height="4.6" fill="#8c8c8c"/><rect x="0" y="531" width="1" height="4.6" fill="#8c8c8c"/><rect x="0" y="539" width="1" height="4.6" fill="#8c8c8c"/><rect x="0" y="547" width="1" height="4.6" fill="#8c8c8c"/><rect x="0" y="555" width="1" height="4.6" fill="#8c8c8c"/><rect x="0" y="563" width="1" height="4.6" fill="#8c8c8c"/><rect x="0" y="571" width="1" height="4.6" fill="#8c8c8c"/><rect x="0" y="579" width="1" height="4.6" fill="#8c8c8c"/><rect x="0" y="587" width="1" height="4.6" fill="#8c8c8c"/><rect x="0" y="595" width="1" height="4.6" fill="#8c8c8c"/><rect x="0" y="603" width="1" height="4.6" fill="#8c8c8c"/></svg><div class="r" style="left:32px;top:278px;width:2px;height:612px;background:#217346;"></div><div class="r" style="left:32px;top:278px;width:860px;height:2px;background:#217346;"></div><div class="r" style="left:890px;top:278px;width:2px;height:612px;background:#217346;"></div><div class="t" style="left:23.0px;top:258.0px;width:60px;text-align:center;font-size:19px;color:#217346;">A</div><div class="t" style="left:96.0px;top:258.0px;width:60px;text-align:center;font-size:19px;color:#217346;">B</div><div class="t" style="left:176.0px;top:258.0px;width:60px;text-align:center;font-size:19px;color:#217346;">C</div><div class="t" style="left:246.0px;top:258.0px;width:60px;text-align:center;font-size:19px;color:#217346;">D</div><div class="t" style="left:355.5px;top:258.0px;width:60px;text-align:center;font-size:19px;color:#217346;">E</div><div class="t" style="left:522.5px;top:258.0px;width:60px;text-align:center;font-size:19px;color:#217346;">F</div><div class="t" style="left:661.0px;top:258.0px;width:60px;text-align:center;font-size:19px;color:#217346;">G</div><div class="t" style="left:779.5px;top:258.0px;width:60px;text-align:center;font-size:19px;color:#217346;">H</div><div class="t" style="left:908.5px;top:258.0px;width:60px;text-align:center;font-size:19px;color:#444444;">I</div><div class="t" style="left:1004.5px;top:258.0px;width:60px;text-align:center;font-size:19px;color:#444444;">J</div><div class="t" style="left:1100.5px;top:258.0px;width:60px;text-align:center;font-size:19px;color:#444444;">K</div><div class="t" style="left:1196.5px;top:258.0px;width:60px;text-align:center;font-size:19px;color:#444444;">L</div><div class="t" style="left:1292.5px;top:258.0px;width:60px;text-align:center;font-size:19px;color:#444444;">M</div><div class="t" style="left:1388.5px;top:258.0px;width:60px;text-align:center;font-size:19px;color:#444444;">N</div><div class="t" style="left:1484.5px;top:258.0px;width:60px;text-align:center;font-size:19px;color:#444444;">O</div><div class="t" style="left:1580.5px;top:258.0px;width:60px;text-align:center;font-size:19px;color:#444444;">P</div><div class="t" style="left:-2.2px;top:286.2px;width:32px;text-align:center;font-size:19px;color:#217346;">1</div><div class="t" style="left:-2.2px;top:315.2px;width:32px;text-align:center;font-size:19px;color:#217346;">2</div><div class="t" style="left:-2.2px;top:344.2px;width:32px;text-align:center;font-size:19px;color:#217346;">3</div><div class="t" style="left:-2.2px;top:373.2px;width:32px;text-align:center;font-size:19px;color:#217346;">4</div><div class="t" style="left:-2.2px;top:402.2px;width:32px;text-align:center;font-size:19px;color:#217346;">5</div><div class="t" style="left:-2.2px;top:431.2px;width:32px;text-align:center;font-size:19px;color:#217346;">6</div><div class="t" style="left:-2.2px;top:460.2px;width:32px;text-align:center;font-size:19px;color:#217346;">7</div><div class="t" style="left:-2.2px;top:489.2px;width:32px;text-align:center;font-size:19px;color:#217346;">8</div><div class="t" style="left:-2.2px;top:518.2px;width:32px;text-align:center;font-size:19px;color:#217346;">9</div><div class="t" style="left:-2.2px;top:547.2px;width:32px;text-align:center;font-size:19px;color:#217346;">10</div><div class="t" style="left:-2.2px;top:576.2px;width:32px;text-align:center;font-size:19px;color:#217346;">11</div><div class="t" style="left:-2.2px;top:605.2px;width:32px;text-align:center;font-size:19px;color:#217346;">12</div><div class="t" style="left:-2.2px;top:634.2px;width:32px;text-align:center;font-size:19px;color:#217346;">13</div><div class="t" style="left:-2.2px;top:663.2px;width:32px;text-align:center;font-size:19px;color:#217346;">14</div><div class="t" style="left:-2.2px;top:692.2px;width:32px;text-align:center;font-size:19px;color:#217346;">15</div><div class="t" style="left:-2.2px;top:721.2px;width:32px;text-align:center;font-size:19px;color:#217346;">16</div><div class="t" style="left:-2.2px;top:750.2px;width:32px;text-align:center;font-size:19px;color:#217346;">17</div><div class="t" style="left:-2.2px;top:779.2px;width:32px;text-align:center;font-size:19px;color:#217346;">18</div><div class="t" style="left:-2.2px;top:808.2px;width:32px;text-align:center;font-size:19px;color:#217346;">19</div><div class="t" style="left:-2.2px;top:837.2px;width:32px;text-align:center;font-size:19px;color:#217346;">20</div><div class="t" style="left:-2.2px;top:866.2px;width:32px;text-align:center;font-size:19px;color:#217346;">21</div><div class="t" style="left:-57.0px;top:285.4px;width:220px;text-align:center;font-size:20px;color:#000000;font-weight:bold;transform:scaleX(0.9867);transform-origin:center center;">ID</div><div class="t" style="left:76.0px;top:285.4px;font-size:20px;color:#000000;font-weight:bold;">Name</div><div class="t" style="left:96.0px;top:285.4px;width:220px;text-align:center;font-size:20px;color:#000000;font-weight:bold;transform:scaleX(0.9217);transform-origin:center center;">Age</div><div class="t" style="left:166.0px;top:285.4px;width:220px;text-align:center;font-size:20px;color:#000000;font-weight:bold;transform:scaleX(0.9652);transform-origin:center center;">Gender</div><div class="t" style="left:275.5px;top:285.4px;width:220px;text-align:center;font-size:20px;color:#000000;font-weight:bold;transform:scaleX(0.9519);transform-origin:center center;">Country</div><div class="t" style="left:440.2px;top:285.4px;width:220px;text-align:center;font-size:20px;color:#000000;font-weight:bold;transform:scaleX(0.9495);transform-origin:center center;">Occupation</div><div class="t" style="left:581.0px;top:285.4px;width:220px;text-align:center;font-size:20px;color:#000000;font-weight:bold;transform:scaleX(0.9291);transform-origin:center center;">Salary</div><div class="t" style="left:699.5px;top:285.4px;width:220px;text-align:center;font-size:20px;color:#000000;font-weight:bold;transform:scaleX(0.9347);transform-origin:center center;">Education Level</div><div class="t" style="left:-57.0px;top:314.4px;width:220px;text-align:center;font-size:20px;color:#000000;">1</div><div class="t" style="left:74.5px;top:314.4px;font-size:20px;color:#000000;transform:scaleX(0.9542);transform-origin:left center;"> John</div><div class="t" style="left:96.0px;top:314.4px;width:220px;text-align:center;font-size:20px;color:#000000;">35</div><div class="t" style="left:166.0px;top:314.4px;width:220px;text-align:center;font-size:20px;color:#000000;transform:scaleX(1.0288);transform-origin:center center;"> Male</div><div class="t" style="left:272.5px;top:314.4px;width:220px;text-align:center;font-size:20px;color:#000000;transform:scaleX(0.8987);transform-origin:center center;">USA</div><div class="t" style="left:439.0px;top:314.4px;width:220px;text-align:center;font-size:20px;color:#000000;transform:scaleX(0.9846);transform-origin:center center;">Engineer</div><div class="t" style="left:581.0px;top:314.4px;width:220px;text-align:center;font-size:20px;color:#000000;">80000</div><div class="t" style="left:700.9px;top:314.4px;width:220px;text-align:center;font-size:20px;color:#000000;transform:scaleX(0.9928);transform-origin:center center;">Bachelor's</div><div class="t" style="left:-57.0px;top:343.4px;width:220px;text-align:center;font-size:20px;color:#000000;">2</div><div class="t" style="left:74.5px;top:343.4px;font-size:20px;color:#000000;transform:scaleX(1.0051);transform-origin:left center;"> Alice</div><div class="t" style="left:96.0px;top:343.4px;width:220px;text-align:center;font-size:20px;color:#000000;">28</div><div class="t" style="left:166.0px;top:343.4px;width:220px;text-align:center;font-size:20px;color:#000000;transform:scaleX(0.9771);transform-origin:center center;">Female</div><div class="t" style="left:272.5px;top:343.4px;width:220px;text-align:center;font-size:20px;color:#000000;transform:scaleX(0.9483);transform-origin:center center;">Canada</div><div class="t" style="left:442.2px;top:343.4px;width:220px;text-align:center;font-size:20px;color:#000000;transform:scaleX(1.0367);transform-origin:center center;">Doctor</div><div class="t" style="left:581.0px;top:343.4px;width:220px;text-align:center;font-size:20px;color:#000000;">100000</div><div class="t" style="left:696.3px;top:343.4px;width:220px;text-align:center;font-size:20px;color:#000000;transform:scaleX(1.0330);transform-origin:center center;">Master's</div><div class="t" style="left:-57.0px;top:372.4px;width:220px;text-align:center;font-size:20px;color:#000000;">3</div><div class="t" style="left:74.5px;top:372.4px;font-size:20px;color:#000000;transform:scaleX(1.0233);transform-origin:left center;"> Michael</div><div class="t" style="left:96.0px;top:372.4px;width:220px;text-align:center;font-size:20px;color:#000000;">42</div><div class="t" style="left:166.0px;top:372.4px;width:220px;text-align:center;font-size:20px;color:#000000;transform:scaleX(1.0288);transform-origin:center center;"> Male</div><div class="t" style="left:278.2px;top:372.4px;width:220px;text-align:center;font-size:20px;color:#000000;transform:scaleX(0.9201);transform-origin:center center;">UK</div><div class="t" style="left:444.5px;top:372.4px;width:220px;text-align:center;font-size:20px;color:#000000;transform:scaleX(1.0076);transform-origin:center center;">Teacher</div><div class="t" style="left:581.0px;top:372.4px;width:220px;text-align:center;font-size:20px;color:#000000;">60000</div><div class="t" style="left:700.9px;top:372.4px;width:220px;text-align:center;font-size:20px;color:#000000;transform:scaleX(0.9928);transform-origin:center center;">Bachelor's</div><div class="t" style="left:-57.0px;top:401.4px;width:220px;text-align:center;font-size:20px;color:#000000;">4</div><div class="t" style="left:74.5px;top:401.4px;font-size:20px;color:#000000;transform:scaleX(0.9397);transform-origin:left center;"> Sarah</div><div class="t" style="left:96.0px;top:401.4px;width:220px;text-align:center;font-size:20px;color:#000000;">30</div><div class="t" style="left:166.0px;top:401.4px;width:220px;text-align:center;font-size:20px;color:#000000;transform:scaleX(0.9771);transform-origin:center center;">Female</div><div class="t" style="left:272.2px;top:401.4px;width:220px;text-align:center;font-size:20px;color:#000000;transform:scaleX(1.0164);transform-origin:center center;">Australia</div><div class="t" style="left:441.4px;top:401.4px;width:220px;text-align:center;font-size:20px;color:#000000;transform:scaleX(1.0125);transform-origin:center center;">Software Developer</div><div class="t" style="left:581.0px;top:401.4px;width:220px;text-align:center;font-size:20px;color:#000000;">75000</div><div class="t" style="left:696.3px;top:401.4px;width:220px;text-align:center;font-size:20px;color:#000000;transform:scaleX(1.0330);transform-origin:center center;">Master's</div><div class="t" style="left:-57.0px;top:430.4px;width:220px;text-align:center;font-size:20px;color:#000000;">5</div><div class="t" style="left:74.5px;top:430.4px;font-size:20px;color:#000000;transform:scaleX(0.9803);transform-origin:left center;"> David</div><div class="t" style="left:96.0px;top:430.4px;width:220px;text-align:center;font-size:20px;color:#000000;">45</div><div class="t" style="left:166.0px;top:430.4px;width:220px;text-align:center;font-size:20px;color:#000000;transform:scaleX(1.0288);transform-origin:center center;"> Male</div><div class="t" style="left:275.8px;top:430.4px;width:220px;text-align:center;font-size:20px;color:#000000;">Germany</div><div class="t" style="left:441.3px;top:430.4px;width:220px;text-align:center;font-size:20px;color:#000000;transform:scaleX(0.9943);transform-origin:center center;">Lawyer</div><div class="t" style="left:581.0px;top:430.4px;width:220px;text-align:center;font-size:20px;color:#000000;transform:scaleX(1.0256);transform-origin:center center;">110000</div><div class="t" style="left:698.7px;top:430.4px;width:220px;text-align:center;font-size:20px;color:#000000;transform:scaleX(0.9369);transform-origin:center center;">PhD</div><div class="t" style="left:-57.0px;top:459.4px;width:220px;text-align:center;font-size:20px;color:#000000;">6</div><div class="t" style="left:74.5px;top:459.4px;font-size:20px;color:#000000;transform:scaleX(0.9795);transform-origin:left center;"> Emily</div><div class="t" style="left:96.0px;top:459.4px;width:220px;text-align:center;font-size:20px;color:#000000;">29</div><div class="t" style="left:166.0px;top:459.4px;width:220px;text-align:center;font-size:20px;color:#000000;transform:scaleX(0.9771);transform-origin:center center;">Female</div><div class="t" style="left:272.7px;top:459.4px;width:220px;text-align:center;font-size:20px;color:#000000;transform:scaleX(0.9659);transform-origin:center center;">France</div><div class="t" style="left:439.4px;top:459.4px;width:220px;text-align:center;font-size:20px;color:#000000;transform:scaleX(0.9934);transform-origin:center center;">Nurse</div><div class="t" style="left:581.0px;top:459.4px;width:220px;text-align:center;font-size:20px;color:#000000;">55000</div><div class="t" style="left:700.9px;top:459.4px;width:220px;text-align:center;font-size:20px;color:#000000;transform:scaleX(0.9928);transform-origin:center center;">Bachelor's</div><div class="t" style="left:-57.0px;top:488.4px;width:220px;text-align:center;font-size:20px;color:#000000;">7</div><div class="t" style="left:74.5px;top:488.4px;font-size:20px;color:#000000;transform:scaleX(0.9255);transform-origin:left center;"> James</div><div class="t" style="left:96.0px;top:488.4px;width:220px;text-align:center;font-size:20px;color:#000000;">38</div><div class="t" style="left:166.0px;top:488.4px;width:220px;text-align:center;font-size:20px;color:#000000;transform:scaleX(1.0288);transform-origin:center center;"> Male</div><div class="t" style="left:277.3px;top:488.4px;width:220px;text-align:center;font-size:20px;color:#000000;transform:scaleX(0.9394);transform-origin:center center;">Japan</div><div class="t" style="left:442.1px;top:488.4px;width:220px;text-align:center;font-size:20px;color:#000000;transform:scaleX(1.0451);transform-origin:center center;">Architect</div><div class="t" style="left:581.0px;top:488.4px;width:220px;text-align:center;font-size:20px;color:#000000;">90000</div><div class="t" style="left:696.3px;top:488.4px;width:220px;text-align:center;font-size:20px;color:#000000;transform:scaleX(1.0330);transform-origin:center center;">Master's</div><div class="t" style="left:-57.0px;top:517.4px;width:220px;text-align:center;font-size:20px;color:#000000;">8</div><div class="t" style="left:74.5px;top:517.4px;font-size:20px;color:#000000;transform:scaleX(0.9922);transform-origin:left center;"> Olivia</div><div class="t" style="left:96.0px;top:517.4px;width:220px;text-align:center;font-size:20px;color:#000000;">33</div><div class="t" style="left:166.0px;top:517.4px;width:220px;text-align:center;font-size:20px;color:#000000;transform:scaleX(0.9771);transform-origin:center center;">Female</div><div class="t" style="left:272.7px;top:517.4px;width:220px;text-align:center;font-size:20px;color:#000000;transform:scaleX(0.9788);transform-origin:center center;">Brazil</div><div class="t" style="left:444.6px;top:517.4px;width:220px;text-align:center;font-size:20px;color:#000000;transform:scaleX(1.0280);transform-origin:center center;">Accountant</div><div class="t" style="left:581.0px;top:517.4px;width:220px;text-align:center;font-size:20px;color:#000000;">70000</div><div class="t" style="left:700.9px;top:517.4px;width:220px;text-align:center;font-size:20px;color:#000000;transform:scaleX(0.9928);transform-origin:center center;">Bachelor's</div><div class="t" style="left:-57.0px;top:546.4px;width:220px;text-align:center;font-size:20px;color:#000000;">9</div><div class="t" style="left:74.5px;top:546.4px;font-size:20px;color:#000000;transform:scaleX(0.9898);transform-origin:left center;"> Daniel</div><div class="t" style="left:96.0px;top:546.4px;width:220px;text-align:center;font-size:20px;color:#000000;">31</div><div class="t" style="left:166.0px;top:546.4px;width:220px;text-align:center;font-size:20px;color:#000000;transform:scaleX(1.0288);transform-origin:center center;"> Male</div><div class="t" style="left:277.3px;top:546.4px;width:220px;text-align:center;font-size:20px;color:#000000;transform:scaleX(0.9535);transform-origin:center center;">Spain</div><div class="t" style="left:441.7px;top:546.4px;width:220px;text-align:center;font-size:20px;color:#000000;transform:scaleX(1.0314);transform-origin:center center;">Marketing Manager</div><div class="t" style="left:581.0px;top:546.4px;width:220px;text-align:center;font-size:20px;color:#000000;">85000</div><div class="t" style="left:696.3px;top:546.4px;width:220px;text-align:center;font-size:20px;color:#000000;transform:scaleX(1.0330);transform-origin:center center;">Master's</div><div class="t" style="left:-57.0px;top:575.4px;width:220px;text-align:center;font-size:20px;color:#000000;">10</div><div class="t" style="left:74.5px;top:575.4px;font-size:20px;color:#000000;transform:scaleX(0.9632);transform-origin:left center;"> Sophia</div><div class="t" style="left:96.0px;top:575.4px;width:220px;text-align:center;font-size:20px;color:#000000;">27</div><div class="t" style="left:166.0px;top:575.4px;width:220px;text-align:center;font-size:20px;color:#000000;transform:scaleX(0.9771);transform-origin:center center;">Female</div><div class="t" style="left:277.4px;top:575.4px;width:220px;text-align:center;font-size:20px;color:#000000;transform:scaleX(1.0484);transform-origin:center center;">Italy</div><div class="t" style="left:441.6px;top:575.4px;width:220px;text-align:center;font-size:20px;color:#000000;transform:scaleX(0.9966);transform-origin:center center;">Scientist</div><div class="t" style="left:581.0px;top:575.4px;width:220px;text-align:center;font-size:20px;color:#000000;">95000</div><div class="t" style="left:698.7px;top:575.4px;width:220px;text-align:center;font-size:20px;color:#000000;transform:scaleX(0.9369);transform-origin:center center;">PhD</div><div class="t" style="left:-57.0px;top:604.4px;width:220px;text-align:center;font-size:20px;color:#000000;transform:scaleX(1.0744);transform-origin:center center;">11</div><div class="t" style="left:74.5px;top:604.4px;font-size:20px;color:#000000;transform:scaleX(0.9808);transform-origin:left center;"> Ethan</div><div class="t" style="left:96.0px;top:604.4px;width:220px;text-align:center;font-size:20px;color:#000000;">40</div><div class="t" style="left:166.0px;top:604.4px;width:220px;text-align:center;font-size:20px;color:#000000;transform:scaleX(1.0288);transform-origin:center center;"> Male</div><div class="t" style="left:276.4px;top:604.4px;width:220px;text-align:center;font-size:20px;color:#000000;transform:scaleX(0.9833);transform-origin:center center;">South Korea</div><div class="t" style="left:441.5px;top:604.4px;width:220px;text-align:center;font-size:20px;color:#000000;transform:scaleX(0.9906);transform-origin:center center;">Professor</div><div class="t" style="left:581.0px;top:604.4px;width:220px;text-align:center;font-size:20px;color:#000000;">120000</div><div class="t" style="left:698.7px;top:604.4px;width:220px;text-align:center;font-size:20px;color:#000000;transform:scaleX(0.9369);transform-origin:center center;">PhD</div><div class="t" style="left:-57.0px;top:633.4px;width:220px;text-align:center;font-size:20px;color:#000000;">12</div><div class="t" style="left:74.5px;top:633.4px;font-size:20px;color:#000000;transform:scaleX(1.0416);transform-origin:left center;"> Mia</div><div class="t" style="left:96.0px;top:633.4px;width:220px;text-align:center;font-size:20px;color:#000000;">26</div><div class="t" style="left:166.0px;top:633.4px;width:220px;text-align:center;font-size:20px;color:#000000;transform:scaleX(0.9771);transform-origin:center center;">Female</div><div class="t" style="left:271.9px;top:633.4px;width:220px;text-align:center;font-size:20px;color:#000000;transform:scaleX(1.0297);transform-origin:center center;">Mexico</div><div class="t" style="left:441.9px;top:633.4px;width:220px;text-align:center;font-size:20px;color:#000000;transform:scaleX(0.9843);transform-origin:center center;">Graphic Designer</div><div class="t" style="left:581.0px;top:633.4px;width:220px;text-align:center;font-size:20px;color:#000000;">50000</div><div class="t" style="left:700.9px;top:633.4px;width:220px;text-align:center;font-size:20px;color:#000000;transform:scaleX(0.9928);transform-origin:center center;">Bachelor's</div><div class="t" style="left:-57.0px;top:662.4px;width:220px;text-align:center;font-size:20px;color:#000000;">13</div><div class="t" style="left:74.5px;top:662.4px;font-size:20px;color:#000000;transform:scaleX(1.0104);transform-origin:left center;"> Alexander</div><div class="t" style="left:96.0px;top:662.4px;width:220px;text-align:center;font-size:20px;color:#000000;">36</div><div class="t" style="left:166.0px;top:662.4px;width:220px;text-align:center;font-size:20px;color:#000000;transform:scaleX(1.0288);transform-origin:center center;"> Male</div><div class="t" style="left:271.9px;top:662.4px;width:220px;text-align:center;font-size:20px;color:#000000;transform:scaleX(0.9205);transform-origin:center center;">Russia</div><div class="t" style="left:441.2px;top:662.4px;width:220px;text-align:center;font-size:20px;color:#000000;transform:scaleX(1.0297);transform-origin:center center;">Entrepreneur</div><div class="t" style="left:581.0px;top:662.4px;width:220px;text-align:center;font-size:20px;color:#000000;">150000</div><div class="t" style="left:700.9px;top:662.4px;width:220px;text-align:center;font-size:20px;color:#000000;transform:scaleX(0.9928);transform-origin:center center;">Bachelor's</div><div class="t" style="left:-57.0px;top:691.4px;width:220px;text-align:center;font-size:20px;color:#000000;">14</div><div class="t" style="left:74.5px;top:691.4px;font-size:20px;color:#000000;transform:scaleX(0.9906);transform-origin:left center;"> Ava</div><div class="t" style="left:96.0px;top:691.4px;width:220px;text-align:center;font-size:20px;color:#000000;">32</div><div class="t" style="left:166.0px;top:691.4px;width:220px;text-align:center;font-size:20px;color:#000000;transform:scaleX(0.9771);transform-origin:center center;">Female</div><div class="t" style="left:276.3px;top:691.4px;width:220px;text-align:center;font-size:20px;color:#000000;transform:scaleX(1.0196);transform-origin:center center;">India</div><div class="t" style="left:444.6px;top:691.4px;width:220px;text-align:center;font-size:20px;color:#000000;transform:scaleX(1.0133);transform-origin:center center;">Consultant</div><div class="t" style="left:581.0px;top:691.4px;width:220px;text-align:center;font-size:20px;color:#000000;">85000</div><div class="t" style="left:696.3px;top:691.4px;width:220px;text-align:center;font-size:20px;color:#000000;transform:scaleX(1.0330);transform-origin:center center;">Master's</div><div class="t" style="left:-57.0px;top:720.4px;width:220px;text-align:center;font-size:20px;color:#000000;">15</div><div class="t" style="left:74.5px;top:720.4px;font-size:20px;color:#000000;transform:scaleX(1.0053);transform-origin:left center;"> Benjamin</div><div class="t" style="left:96.0px;top:720.4px;width:220px;text-align:center;font-size:20px;color:#000000;">39</div><div class="t" style="left:166.0px;top:720.4px;width:220px;text-align:center;font-size:20px;color:#000000;transform:scaleX(1.0288);transform-origin:center center;"> Male</div><div class="t" style="left:276.5px;top:720.4px;width:220px;text-align:center;font-size:20px;color:#000000;transform:scaleX(0.9645);transform-origin:center center;">China</div><div class="t" style="left:441.8px;top:720.4px;width:220px;text-align:center;font-size:20px;color:#000000;transform:scaleX(0.9894);transform-origin:center center;">Banker</div><div class="t" style="left:581.0px;top:720.4px;width:220px;text-align:center;font-size:20px;color:#000000;">130000</div><div class="t" style="left:696.3px;top:720.4px;width:220px;text-align:center;font-size:20px;color:#000000;transform:scaleX(1.0330);transform-origin:center center;">Master's</div><div class="t" style="left:-57.0px;top:749.4px;width:220px;text-align:center;font-size:20px;color:#000000;">16</div><div class="t" style="left:74.5px;top:749.4px;font-size:20px;color:#000000;transform:scaleX(1.0240);transform-origin:left center;"> Charlotte</div><div class="t" style="left:96.0px;top:749.4px;width:220px;text-align:center;font-size:20px;color:#000000;">25</div><div class="t" style="left:166.0px;top:749.4px;width:220px;text-align:center;font-size:20px;color:#000000;transform:scaleX(0.9771);transform-origin:center center;">Female</div><div class="t" style="left:272.4px;top:749.4px;width:220px;text-align:center;font-size:20px;color:#000000;transform:scaleX(1.0252);transform-origin:center center;">Argentina</div><div class="t" style="left:442.4px;top:749.4px;width:220px;text-align:center;font-size:20px;color:#000000;transform:scaleX(1.1008);transform-origin:center center;">Writer</div><div class="t" style="left:581.0px;top:749.4px;width:220px;text-align:center;font-size:20px;color:#000000;">45000</div><div class="t" style="left:700.9px;top:749.4px;width:220px;text-align:center;font-size:20px;color:#000000;transform:scaleX(0.9928);transform-origin:center center;">Bachelor's</div><div class="t" style="left:-57.0px;top:778.4px;width:220px;text-align:center;font-size:20px;color:#000000;">17</div><div class="t" style="left:74.5px;top:778.4px;font-size:20px;color:#000000;transform:scaleX(1.0404);transform-origin:left center;"> William</div><div class="t" style="left:96.0px;top:778.4px;width:220px;text-align:center;font-size:20px;color:#000000;">34</div><div class="t" style="left:166.0px;top:778.4px;width:220px;text-align:center;font-size:20px;color:#000000;transform:scaleX(1.0288);transform-origin:center center;"> Male</div><div class="t" style="left:271.9px;top:778.4px;width:220px;text-align:center;font-size:20px;color:#000000;transform:scaleX(0.9801);transform-origin:center center;">Sweden</div><div class="t" style="left:441.9px;top:778.4px;width:220px;text-align:center;font-size:20px;color:#000000;transform:scaleX(0.9832);transform-origin:center center;">Psychologist</div><div class="t" style="left:581.0px;top:778.4px;width:220px;text-align:center;font-size:20px;color:#000000;">75000</div><div class="t" style="left:698.7px;top:778.4px;width:220px;text-align:center;font-size:20px;color:#000000;transform:scaleX(0.9369);transform-origin:center center;">PhD</div><div class="t" style="left:-57.0px;top:807.4px;width:220px;text-align:center;font-size:20px;color:#000000;">18</div><div class="t" style="left:74.5px;top:807.4px;font-size:20px;color:#000000;transform:scaleX(1.0058);transform-origin:left center;"> Harper</div><div class="t" style="left:96.0px;top:807.4px;width:220px;text-align:center;font-size:20px;color:#000000;">31</div><div class="t" style="left:166.0px;top:807.4px;width:220px;text-align:center;font-size:20px;color:#000000;transform:scaleX(0.9771);transform-origin:center center;">Female</div><div class="t" style="left:272.3px;top:807.4px;width:220px;text-align:center;font-size:20px;color:#000000;transform:scaleX(1.0284);transform-origin:center center;">Norway</div><div class="t" style="left:442.1px;top:807.4px;width:220px;text-align:center;font-size:20px;color:#000000;transform:scaleX(1.0711);transform-origin:center center;">Artist</div><div class="t" style="left:581.0px;top:807.4px;width:220px;text-align:center;font-size:20px;color:#000000;">60000</div><div class="t" style="left:700.9px;top:807.4px;width:220px;text-align:center;font-size:20px;color:#000000;transform:scaleX(0.9928);transform-origin:center center;">Bachelor's</div><div class="t" style="left:-57.0px;top:836.4px;width:220px;text-align:center;font-size:20px;color:#000000;">19</div><div class="t" style="left:74.5px;top:836.4px;font-size:20px;color:#000000;transform:scaleX(1.0073);transform-origin:left center;"> Mason</div><div class="t" style="left:96.0px;top:836.4px;width:220px;text-align:center;font-size:20px;color:#000000;">37</div><div class="t" style="left:166.0px;top:836.4px;width:220px;text-align:center;font-size:20px;color:#000000;transform:scaleX(1.0288);transform-origin:center center;"> Male</div><div class="t" style="left:274.8px;top:836.4px;width:220px;text-align:center;font-size:20px;color:#000000;transform:scaleX(1.0087);transform-origin:center center;">Denmark</div><div class="t" style="left:444.1px;top:836.4px;width:220px;text-align:center;font-size:20px;color:#000000;transform:scaleX(0.9691);transform-origin:center center;">Chef</div><div class="t" style="left:581.0px;top:836.4px;width:220px;text-align:center;font-size:20px;color:#000000;">100000</div><div class="t" style="left:700.0px;top:836.4px;width:220px;text-align:center;font-size:20px;color:#000000;transform:scaleX(1.0205);transform-origin:center center;">Diploma</div><div class="t" style="left:-57.0px;top:865.4px;width:220px;text-align:center;font-size:20px;color:#000000;">20</div><div class="t" style="left:74.5px;top:865.4px;font-size:20px;color:#000000;transform:scaleX(0.9630);transform-origin:left center;"> Evelyn</div><div class="t" style="left:96.0px;top:865.4px;width:220px;text-align:center;font-size:20px;color:#000000;">29</div><div class="t" style="left:166.0px;top:865.4px;width:220px;text-align:center;font-size:20px;color:#000000;transform:scaleX(0.9771);transform-origin:center center;">Female</div><div class="t" style="left:277.0px;top:865.4px;width:220px;text-align:center;font-size:20px;color:#000000;transform:scaleX(1.0083);transform-origin:center center;">Switzerland</div><div class="t" style="left:441.8px;top:865.4px;width:220px;text-align:center;font-size:20px;color:#000000;transform:scaleX(1.0149);transform-origin:center center;">Physiotherapist</div><div class="t" style="left:581.0px;top:865.4px;width:220px;text-align:center;font-size:20px;color:#000000;">70000</div><div class="t" style="left:696.3px;top:865.4px;width:220px;text-align:center;font-size:20px;color:#000000;transform:scaleX(1.0330);transform-origin:center center;">Master's</div><div class="r" style="left:1391px;top:154px;width:262px;height:605px;box-sizing:border-box;border:2px solid #8f8f8f;border-radius:6px;background:#fff;box-shadow:0 6px 18px rgba(0,0,0,0.16);overflow:hidden;"><div class="r" style="left:0;top:0px;width:258px;height:37px;background:#e6e6e6;"></div><div class="r" style="left:0;top:228px;width:258px;height:37px;background:#e6e6e6;"></div><div class="r" style="left:0;top:302px;width:258px;height:37px;background:#e6e6e6;"></div><div class="r" style="left:0;top:450px;width:258px;height:37px;background:#e6e6e6;"></div></div><div class="t" style="left:1404.4px;top:168.6px;font-size:17px;color:#1a1a1a;font-weight:bold;">Cell Size</div><div class="t" style="left:1404.4px;top:395.9px;font-size:17px;color:#1a1a1a;font-weight:bold;transform:scaleX(1.0450);transform-origin:left center;">Visibility</div><div class="t" style="left:1404.4px;top:470.0px;font-size:17px;color:#1a1a1a;font-weight:bold;transform:scaleX(1.0300);transform-origin:left center;">Organize Sheets</div><div class="t" style="left:1404.4px;top:617.5px;font-size:17px;color:#1a1a1a;font-weight:bold;transform:scaleX(1.0460);transform-origin:left center;">Protection</div><div class="t" style="left:1440.2px;top:207.7px;font-size:18px;color:#262626;transform:scaleX(0.9886);transform-origin:left center;">Row <u>H</u>eight...</div><div class="t" style="left:1440.2px;top:244.6px;font-size:18px;color:#262626;"><u>A</u>utoFit Row Height</div><div class="t" style="left:1440.2px;top:284.3px;font-size:18px;color:#262626;transform:scaleX(1.0040);transform-origin:left center;">Column <u>W</u>idth...</div><div class="t" style="left:1440.2px;top:321.4px;font-size:18px;color:#262626;transform:scaleX(1.0161);transform-origin:left center;">AutoFi<u>t</u> Column Width</div><div class="t" style="left:1440.2px;top:357.9px;font-size:18px;color:#262626;"><u>D</u>efault Width...</div><div class="t" style="left:1440.2px;top:431.4px;font-size:18px;color:#262626;transform:scaleX(1.0140);transform-origin:left center;">Hide &amp; <u>U</u>nhide</div><div class="t" style="left:1440.2px;top:505.6px;font-size:18px;color:#262626;transform:scaleX(0.9333);transform-origin:left center;"><u>R</u>ename Sheet</div><div class="t" style="left:1440.2px;top:542.9px;font-size:18px;color:#262626;transform:scaleX(0.9802);transform-origin:left center;"><u>M</u>ove or Copy Sheet...</div><div class="t" style="left:1440.2px;top:579.8px;font-size:18px;color:#262626;"><u>T</u>ab Color</div><div class="t" style="left:1440.2px;top:654.2px;font-size:18px;color:#262626;transform:scaleX(0.9492);transform-origin:left center;"><u>P</u>rotect Sheet...</div><div class="t" style="left:1440.2px;top:691.0px;font-size:18px;color:#262626;transform:scaleX(0.9274);transform-origin:left center;"><u>L</u>ock Cell</div><div class="t" style="left:1440.2px;top:731.0px;font-size:18px;color:#262626;transform:scaleX(0.9518);transform-origin:left center;">Format C<u>e</u>lls...</div><div class="r" style="left:1441px;top:270px;width:211px;height:1px;background:#e3e3e3;"></div><div class="r" style="left:1441px;top:717px;width:211px;height:1px;background:#e3e3e3;"></div><svg class="r" style="left:1630px;top:432px;" width="10" height="14" viewBox="0 0 10 14"><polygon points="2,1 8,7 2,13" fill="#262626"/></svg><svg class="r" style="left:1630px;top:581px;" width="10" height="14" viewBox="0 0 10 14"><polygon points="2,1 8,7 2,13" fill="#262626"/></svg><svg class="r" style="left:0;top:0" width="1659" height="890" viewBox="0 0 1659 890"><path d="M1403.4,204 V211.5 M1403.4,215 V223.8 M1400.9,206.5 L1403.4,204 L1405.9,206.5 M1400.9,221.3 L1403.4,223.8 L1405.9,221.3" fill="none" stroke="#3f77b8" stroke-width="1.2"/><path d="M1422,203.6 H1410.5 V224.3 H1422" fill="none" stroke="#6d6d6d" stroke-width="1.1"/><path d="M1400.2,291.7 V280.2 H1421.6 V291.7" fill="none" stroke="#6d6d6d" stroke-width="1.1"/><path d="M1401,298.8 H1409 M1412.5,298.8 H1420.8 M1403.5,296.3 L1401,298.8 L1403.5,301.3 M1418.3,296.3 L1420.8,298.8 L1418.3,301.3" fill="none" stroke="#3f77b8" stroke-width="1.2"/><path d="M1409.7,509.2 H1412.3 V512 H1415 V514.6 H1412.3 V517.4 H1409.7 V514.6 H1407 V512 H1409.7 Z" fill="#f39c1e"/><path d="M1400.7,650.7 H1421.5 V660 M1400.7,650.7 V668.9 H1411 M1400.7,655.5 H1421.5 M1400.7,661.5 H1412 M1405.5,650.7 V668.9 M1411,650.7 V661 M1416.5,650.7 V660" fill="none" stroke="#8a8a8a" stroke-width="1"/><path d="M1414.5,665 V662.6 Q1414.5,659.8 1417.5,659.8 Q1420.5,659.8 1420.5,662.6 V665" fill="none" stroke="#eac37d" stroke-width="1.6"/><rect x="1412.3" y="664.8" width="10.6" height="7.6" rx="1" fill="#eac37d"/><rect x="1417" y="666.5" width="1.2" height="3.5" fill="#fff"/><rect x="1397.3" y="684.1" width="27.6" height="27.8" fill="#f7f7f7" stroke="#262626" stroke-width="1.7"/><path d="M1405.6,695.5 V692.5 Q1405.6,687.3 1411,687.3 Q1416.4,687.3 1416.4,692.5 V695.5" fill="none" stroke="#eac37d" stroke-width="2.4"/><rect x="1403.1" y="695" width="15.8" height="12.7" rx="1.5" fill="#eac37d"/><circle cx="1411" cy="699.8" r="1.6" fill="#fff"/><rect x="1410.3" y="700" width="1.4" height="4.4" fill="#fff"/><rect x="1402.4" y="727.6" width="18" height="20.5" fill="#fff" stroke="#6d6d6d" stroke-width="1"/><rect x="1401.9" y="727.1" width="19" height="3.4" fill="#3f77b8"/><circle cx="1406.3" cy="734.1" r="1.2" fill="#6d6d6d"/><circle cx="1406.3" cy="739.4" r="1.1" fill="none" stroke="#6d6d6d" stroke-width="0.8"/><circle cx="1406.3" cy="744" r="1.1" fill="none" stroke="#6d6d6d" stroke-width="0.8"/><path d="M1409,734.1 H1417.7 M1409,739.4 H1417.7 M1409,744 H1412 M1414,744 H1417.7" stroke="#6d6d6d" stroke-width="1"/></svg><div class="r" style="left:1390px;top:115px;width:119px;height:43px;background:#ed1c24;"></div><div class="r" style="left:1395px;top:120px;width:109px;height:33px;background:#a0cdb4;"></div><svg class="r" style="left:0;top:0" width="1659" height="190" viewBox="0 0 1659 190"><path d="M1396.5,124.2 V128.8 M1413.6,124.2 V128.8 M1397.5,126.5 H1412.6 M1400,124.2 L1397.6,126.5 L1400,128.8 M1410.1,124.2 L1412.5,126.5 L1410.1,128.8" fill="none" stroke="#3f77b8" stroke-width="1.1"/><rect x="1396.8" y="130.8" width="20.4" height="13.7" fill="#fff" stroke="#6d6d6d" stroke-width="1"/><path d="M1401.5,130.8 V144.5 M1408.4,130.8 V144.5 M1413.4,130.8 V144.5 M1396.8,133.4 H1417.2 M1396.8,141.5 H1417.2" stroke="#a8a8a8" stroke-width="1"/><rect x="1401.9" y="133.9" width="6" height="7.2" fill="#3f77b8"/><path d="M1396.8,144.5 V147 H1402 L1403.5,145 H1406 V147 H1409.5 L1411.5,144.5" fill="#fff" stroke="#6d6d6d" stroke-width="0.9"/><polyline points="1486,134 1490.2,138.2 1494.4,134" fill="none" stroke="#1e1e1e" stroke-width="1.5"/></svg><div class="t" style="left:1422.6px;top:129.4px;font-size:18px;color:#262626;">Format</div>
</body></html>
